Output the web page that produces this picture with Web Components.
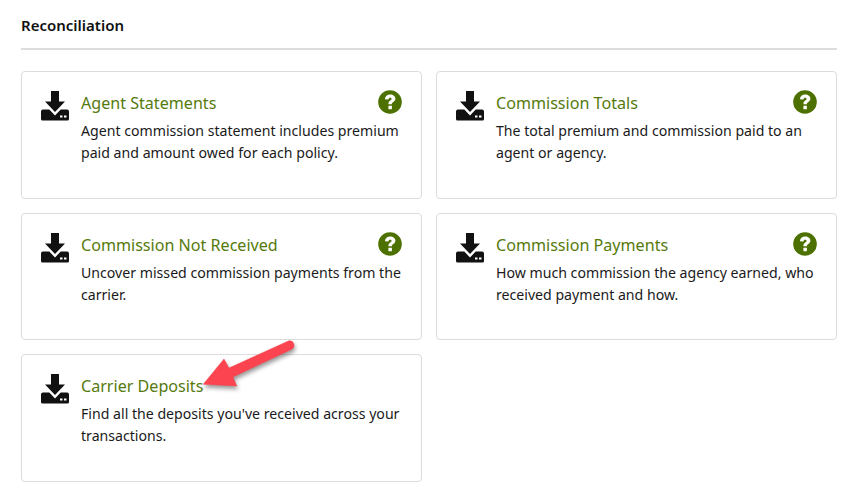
<!DOCTYPE html>
<html lang="en">
<head>
<meta charset="utf-8">
<title>Reconciliation</title>
<style>
  html, body { margin: 0; padding: 0; background: #ffffff; }
  body { font-family: "Noto Sans", "Open Sans", sans-serif; }
</style>
</head>
<body>
<report-section title="Reconciliation">
  <report-card title="Agent Statements" help>Agent commission statement includes premium paid and amount owed for each policy.</report-card>
  <report-card title="Commission Totals" help>The total premium and commission paid to an agent or agency.</report-card>
  <report-card title="Commission Not Received" help>Uncover missed commission payments from the carrier.</report-card>
  <report-card title="Commission Payments" help>How much commission the agency earned, who received payment and how.</report-card>
  <report-card title="Carrier Deposits">Find all the deposits you've received across your transactions.</report-card>
  <callout-arrow></callout-arrow>
</report-section>

<script>
class ReportSection extends HTMLElement {
  constructor() {
    super();
    this.attachShadow({ mode: "open" });
  }

  connectedCallback() {
    const title = this.getAttribute("title") || "";

    this.shadowRoot.innerHTML = `
      <style>
        :host {
          display: block;
          box-sizing: border-box;
          position: relative;
          width: 846px;
          height: 493px;
          padding: 16px 9px 0 21px;
        }

        h2 {
          margin: 0;
          height: 32px;
          line-height: 18px;
          font-size: 15px;
          font-weight: 600;
          color: #111111;
          border-bottom: 2px solid #dddddd;
        }

        .cards {
          display: grid;
          grid-template-columns: 401px 401px;
          grid-auto-rows: 127.5px;
          column-gap: 14px;
          row-gap: 14px;
          margin-top: 21px;
        }
      </style>

      <h2>${title}</h2>
      <div class="cards"><slot></slot></div>
    `;
  }
}

class ReportCard extends HTMLElement {
  constructor() {
    super();
    this.attachShadow({ mode: "open" });
  }

  connectedCallback() {
    const title = this.getAttribute("title") || "";
    const help = this.hasAttribute("help") ? `
      <svg class="help" viewBox="0 0 24 24" width="24" height="24">
        <circle cx="12" cy="12" r="11.8" fill="#4d7100"/>
        <path d="M6.900 9.200c.2-3 2.300-4.800 5.300-4.800 2.900 0 5.200 1.700 5.200 4.200 0 1.900-1.100 2.800-2.400 3.700-.9.600-1.100 1-1.100 2h-3.500c0-2 .5-3 1.900-3.900.9-.6 1.300-1 1.300-1.500 0-.7-.7-1.200-1.500-1.200-1 0-1.500.6-1.600 1.700z" fill="#ffffff"/>
        <rect x="10.400" y="15.700" width="3.500" height="3.500" rx=".4" fill="#ffffff"/>
      </svg>` : "";

    this.shadowRoot.innerHTML = `
      <style>
        :host {
          display: block;
          box-sizing: border-box;
          border: 1px solid #dcdcdc;
          border-radius: 4px;
          background: #ffffff;
          padding: 19px 19px 0 19px;
        }

        .row {
          display: flex;
          gap: 12px;
        }

        .download {
          flex: none;
          width: 28px;
          height: 30px;
        }

        .text {
          flex: 1;
          min-width: 0;
        }

        .head {
          display: flex;
          justify-content: space-between;
          align-items: flex-start;
          height: 29px;
        }

        h3 {
          margin: 0;
          font-size: 16.1px;
          font-weight: 400;
          line-height: 24px;
          color: #557a0c;
        }

        .help {
          flex: none;
          margin-top: -1px;
        }

        p {
          margin: 0;
          font-size: 14.13px;
          line-height: 22px;
          color: #1a1a1a;
        }
      </style>

      <div class="row">
        <svg class="download" viewBox="0 0 28 30">
          <path d="M10 0h8v10.500h6L14 21 4 10.500h6z" fill="#111111"/>
          <path d="M0 20.500a2 2 0 0 1 2-2h6.300L14 24.500l5.700-6H26a2 2 0 0 1 2 2V28a1.500 1.500 0 0 1-1.500 1.500h-25A1.500 1.500 0 0 1 0 28z" fill="#111111"/>
          <rect x="19" y="24.500" width="2.500" height="2" fill="#ffffff"/>
          <rect x="23" y="24.500" width="2.500" height="2" fill="#ffffff"/>
        </svg>
        <div class="text">
          <div class="head"><h3>${title}</h3>${help}</div>
          <p><slot></slot></p>
        </div>
      </div>
    `;
  }
}

class CalloutArrow extends HTMLElement {
  constructor() {
    super();
    this.attachShadow({ mode: "open" });
  }

  connectedCallback() {
    this.shadowRoot.innerHTML = `
      <style>
        :host {
          display: block;
          position: absolute;
          left: 195px;
          top: 335px;
          width: 110px;
          height: 65px;
          pointer-events: none;
        }

        svg {
          display: block;
          overflow: visible;
          filter: drop-shadow(1px 3px 2px rgba(0, 0, 0, 0.4));
        }
      </style>

      <svg viewBox="0 0 110 65" width="110" height="65">
        <path d="M8.300 49.300L29 24 L34 33 L94 5.700 A4.600 4.600 0 0 1 96.700 14.300 L38 42 L41.700 51z" fill="#fb4450" stroke="#fb4450" stroke-width=".5" stroke-linejoin="round"/>
      </svg>
    `;
  }
}

customElements.define("report-section", ReportSection);
customElements.define("report-card", ReportCard);
customElements.define("callout-arrow", CalloutArrow);
</script>
</body>
</html>
